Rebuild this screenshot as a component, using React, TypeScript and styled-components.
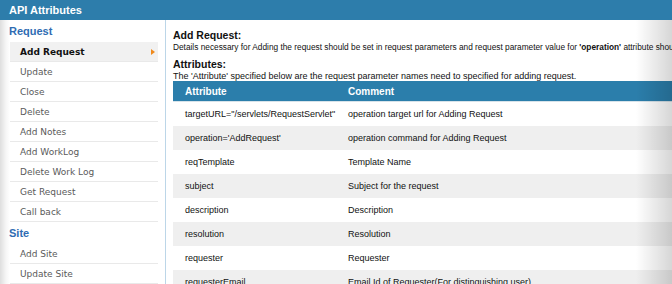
import React from "react";
import styled, { createGlobalStyle } from "styled-components";

const Global = createGlobalStyle`
  html, body { margin: 0; padding: 0; background: #fff; }
  body { font-family: "Liberation Sans", Arial, sans-serif; }
`;

const Page = styled.div`
  position: relative;
  width: 672px;
  height: 284px;
  overflow: hidden;
  display: flex;
  flex-direction: column;
`;

const TopBar = styled.div`
  height: 20px;
  flex: none;
  background: #2d7dab;
  color: #fff;
  font: bold 11px/20px "Liberation Sans", Arial, sans-serif;
  padding-left: 9px;
`;

const Body = styled.div`
  flex: 1;
  display: flex;
  min-height: 0;
`;

const Sidebar = styled.div`
  width: 165px;
  flex: none;
  border-right: 1px solid #bcd6e8;
  background: linear-gradient(to right, #dedede 0px, #f6f6f6 6px, #fff 10px);
`;

const SectionTitle = styled.div`
  height: 22px;
  padding-left: 9px;
  color: #2f6cb2;
  font: bold 11px/23px "Liberation Sans", Arial, sans-serif;
`;

const NavList = styled.div`
  margin-left: 10px;
  width: 148px;
  display: flex;
  flex-direction: column;
`;

const NavItem = styled.div<{ $active?: boolean }>`
  position: relative;
  height: 20px;
  box-sizing: border-box;
  border-bottom: 1px solid #e9e9e9;
  padding-left: 10px;
  font-family: "DejaVu Sans", Verdana, sans-serif;
  font-size: 9px;
  line-height: 20px;
  color: ${(p) => (p.$active ? "#111" : "#5a5a5a")};
  font-weight: ${(p) => (p.$active ? "bold" : "normal")};
  background: ${(p) => (p.$active ? "#f1f1f1" : "transparent")};
`;

const Arrow = styled.span`
  position: absolute;
  right: 3px;
  top: 7px;
  width: 0;
  height: 0;
  border-top: 3px solid transparent;
  border-bottom: 3px solid transparent;
  border-left: 4px solid #f08a1c;
`;

const Content = styled.div`
  flex: 1;
  min-width: 0;
  padding-left: 7px;
  overflow: hidden;
`;

const Heading = styled.div<{ $top: number }>`
  font: bold 10.5px/13px "Liberation Sans", Arial, sans-serif;
  color: #111;
  white-space: nowrap;
  margin-top: ${(p) => p.$top}px;
`;

const Desc = styled.div<{ $size: number }>`
  font-size: ${(p) => p.$size}px;
  line-height: 10px;
  color: #111;
  white-space: nowrap;
`;

const Table = styled.table`
  width: 640px;
  table-layout: fixed;
  border-collapse: collapse;
  margin-top: 0;
  font-family: "Liberation Sans", Arial, sans-serif;
`;

const Col = styled.col<{ $w?: number }>`
  width: ${(p) => (p.$w ? `${p.$w}px` : "auto")};
`;

const Th = styled.th`
  background: #2b7eab;
  color: #fff;
  text-align: left;
  font: bold 10px "Liberation Sans", Arial, sans-serif;
  height: 20px;
  padding: 0 0 0 12px;
  border-bottom: 1px solid #d7e3ea;
`;

const Tr = styled.tr<{ $alt: boolean }>`
  background: ${(p) => (p.$alt ? "#efefef" : "#fff")};
`;

const Td = styled.td`
  height: 24px;
  padding: 0 0 0 12px;
  font-size: 9px;
  color: #111;
  white-space: nowrap;
`;

const Fade = styled.div`
  position: absolute;
  top: 20px;
  right: 0;
  bottom: 0;
  width: 36px;
  pointer-events: none;
  background: linear-gradient(to right, rgba(0,0,0,0), rgba(0,0,0,0.16));
`;

const requestItems = [
  "Add Request",
  "Update",
  "Close",
  "Delete",
  "Add Notes",
  "Add WorkLog",
  "Delete Work Log",
  "Get Request",
  "Call back",
];

const siteItems = ["Add Site", "Update Site"];

const rows: [string, string][] = [
  ['targetURL="/servlets/RequestServlet"', "operation target url for Adding Request"],
  ["operation='AddRequest'", "operation command for Adding Request"],
  ["reqTemplate", "Template Name"],
  ["subject", "Subject for the request"],
  ["description", "Description"],
  ["resolution", "Resolution"],
  ["requester", "Requester"],
  ["requesterEmail", "Email Id of Requester(For distinguishing user)"],
];

export default function App() {
  return (
    <>
      <Global />
      <Page>
        <TopBar>API Attributes</TopBar>
        <Body>
          <Sidebar>
            <SectionTitle>Request</SectionTitle>
            <NavList>
              {requestItems.map((t, i) => (
                <NavItem key={t} $active={i === 0}>
                  {t}
                  {i === 0 && <Arrow />}
                </NavItem>
              ))}
            </NavList>
            <SectionTitle>Site</SectionTitle>
            <NavList>
              {siteItems.map((t) => (
                <NavItem key={t}>{t}</NavItem>
              ))}
            </NavList>
          </Sidebar>
          <Content>
            <Heading $top={9}>Add Request:</Heading>
            <Desc $size={8.3}>
              Details necessary for Adding the request should be set in request parameters and request parameter value for <b>'operation'</b> attribute should be set as 'AddRequest'.
            </Desc>
            <Heading $top={6}>Attributes:</Heading>
            <Desc $size={9}>
              The 'Attribute' specified below are the request parameter names need to specified for adding request.
            </Desc>
            <Table>
              <colgroup>
                <Col $w={163} />
                <Col />
              </colgroup>
              <thead>
                <tr>
                  <Th>Attribute</Th>
                  <Th>Comment</Th>
                </tr>
              </thead>
              <tbody>
                {rows.map(([a, c], i) => (
                  <Tr key={a} $alt={i % 2 === 1}>
                    <Td>{a}</Td>
                    <Td>{c}</Td>
                  </Tr>
                ))}
              </tbody>
            </Table>
          </Content>
        </Body>
        <Fade />
      </Page>
    </>
  );
}
